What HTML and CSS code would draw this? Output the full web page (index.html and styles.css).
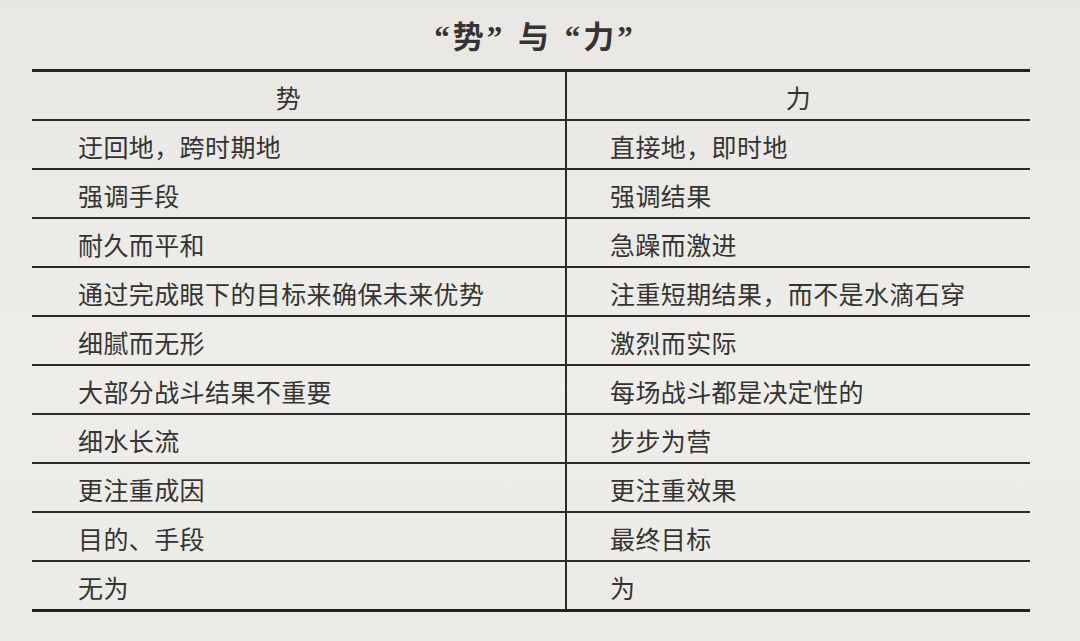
FILE: index.html
```html
<!DOCTYPE html>
<html lang="zh-CN">
<head>
<meta charset="utf-8">
<title>“势”与“力”</title>
<link rel="stylesheet" href="styles.css">
</head>
<body>
<div class="page">
  <h1 class="title">“势” 与 “力”</h1>
  <div class="table">
    <div class="cell head left">势</div>
    <div class="cell head">力</div>
    <div class="cell left">迂回地，跨时期地</div>
    <div class="cell">直接地，即时地</div>
    <div class="cell left">强调手段</div>
    <div class="cell">强调结果</div>
    <div class="cell left">耐久而平和</div>
    <div class="cell">急躁而激进</div>
    <div class="cell left">通过完成眼下的目标来确保未来优势</div>
    <div class="cell">注重短期结果，而不是水滴石穿</div>
    <div class="cell left">细腻而无形</div>
    <div class="cell">激烈而实际</div>
    <div class="cell left">大部分战斗结果不重要</div>
    <div class="cell">每场战斗都是决定性的</div>
    <div class="cell left">细水长流</div>
    <div class="cell">步步为营</div>
    <div class="cell left">更注重成因</div>
    <div class="cell">更注重效果</div>
    <div class="cell left">目的、手段</div>
    <div class="cell">最终目标</div>
    <div class="cell left last">无为</div>
    <div class="cell last">为</div>
  </div>
</div>
</body>
</html>
```

FILE: styles.css
```css
html, body {
  margin: 0;
  padding: 0;
}

body {
  width: 1080px;
  height: 641px;
  overflow: hidden;
  background: linear-gradient(180deg, #e8e7e3 0%, #eeede9 60%, #ebeae6 100%);
  font-family: "Noto Sans CJK SC", "Noto Sans", sans-serif;
  color: #353432;
}

.page {
  padding: 0 50px 0 32px;
}

.title {
  margin: 0;
  height: 69px;
  box-sizing: border-box;
  padding-top: 20px;
  padding-left: 8px;
  text-align: center;
  font-family: "Liberation Serif", "Noto Sans CJK SC", serif;
  font-size: 31px;
  line-height: 36px;
  font-weight: 700;
  letter-spacing: 3px;
  word-spacing: 2px;
  color: #353432;
}

.table {
  display: grid;
  grid-template-columns: 535px 1fr;
  border-top: 3px solid #232221;
  border-bottom: 3px solid #232221;
}

.cell {
  border-bottom: 2px solid #2c2b29;
  display: flex;
  align-items: center;
  padding-left: 43px;
  padding-top: 3px;
  box-sizing: content-box;
  height: 44px;
  font-size: 25px;
  letter-spacing: 0.4px;
  line-height: 1;
  white-space: nowrap;
}

.cell.left {
  border-right: 2px solid #2c2b29;
  padding-left: 46px;
}

.cell.head {
  justify-content: center;
  padding-left: 0;
}

.cell.head.left {
  padding-right: 20px;
}

.cell.last {
  border-bottom: none;
}
```
